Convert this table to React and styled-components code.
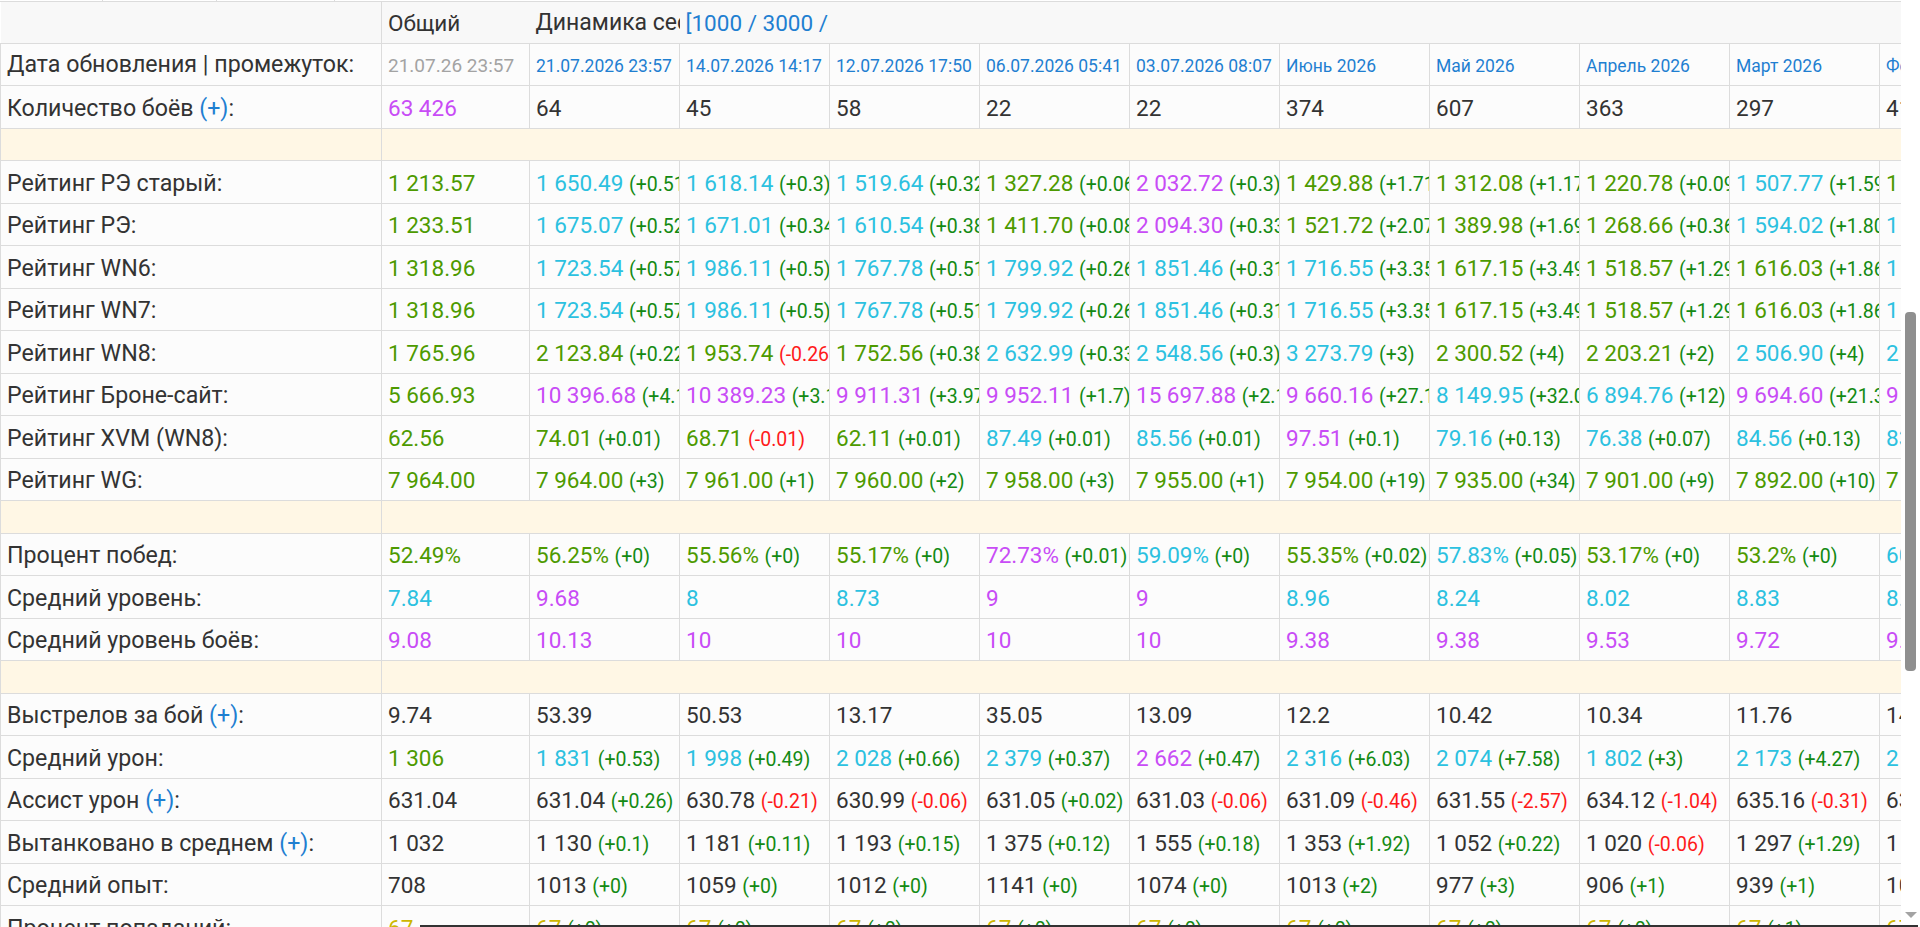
import React from 'react';
import styled, { createGlobalStyle } from 'styled-components';

const GlobalStyle = createGlobalStyle`
  html, body {
    margin: 0;
    height: 100%;
    overflow: hidden;
    background: #fff;
  }
  body {
    font-family: Roboto, "Liberation Sans", sans-serif;
  }
`;

const TONES = {
  g: '#4d9a00',
  c: '#2cc1e0',
  p: '#c84cf6',
  y: '#cdb700',
};

const COLUMNS = [
  '21.07.2026 23:57',
  '14.07.2026 14:17',
  '12.07.2026 17:50',
  '06.07.2026 05:41',
  '03.07.2026 08:07',
  'Июнь 2026',
  'Май 2026',
  'Апрель 2026',
  'Март 2026',
  'Февраль 2026',
];

const COUNTS = ['64', '45', '58', '22', '22', '374', '607', '363', '297', '412'];

const WN6 = [
  ['1 723.54', 'c', '+0.57'], ['1 986.11', 'c', '+0.5'], ['1 767.78', 'c', '+0.51'],
  ['1 799.92', 'c', '+0.26'], ['1 851.46', 'c', '+0.31'], ['1 716.55', 'c', '+3.35'],
  ['1 617.15', 'g', '+3.49'], ['1 518.57', 'g', '+1.29'], ['1 616.03', 'g', '+1.86'],
  ['1 702.44', 'c', '+2.1'],
];

// groups of rows, a yellow band goes between them
const GROUPS = [
  [
    {
      label: 'Рейтинг РЭ старый:', total: ['1 213.57', 'g'],
      cells: [
        ['1 650.49', 'c', '+0.51'], ['1 618.14', 'c', '+0.3'], ['1 519.64', 'c', '+0.32'],
        ['1 327.28', 'g', '+0.06'], ['2 032.72', 'p', '+0.3'], ['1 429.88', 'g', '+1.71'],
        ['1 312.08', 'g', '+1.17'], ['1 220.78', 'g', '+0.09'], ['1 507.77', 'c', '+1.59'],
        ['1 398.42', 'g', '+1.2'],
      ],
    },
    {
      label: 'Рейтинг РЭ:', total: ['1 233.51', 'g'],
      cells: [
        ['1 675.07', 'c', '+0.52'], ['1 671.01', 'c', '+0.34'], ['1 610.54', 'c', '+0.38'],
        ['1 411.70', 'g', '+0.08'], ['2 094.30', 'p', '+0.33'], ['1 521.72', 'g', '+2.07'],
        ['1 389.98', 'g', '+1.69'], ['1 268.66', 'g', '+0.36'], ['1 594.02', 'c', '+1.80'],
        ['1 552.10', 'c', '+1.4'],
      ],
    },
    { label: 'Рейтинг WN6:', total: ['1 318.96', 'g'], cells: WN6 },
    { label: 'Рейтинг WN7:', total: ['1 318.96', 'g'], cells: WN6 },
    {
      label: 'Рейтинг WN8:', total: ['1 765.96', 'g'],
      cells: [
        ['2 123.84', 'g', '+0.22'], ['1 953.74', 'g', '-0.26'], ['1 752.56', 'g', '+0.38'],
        ['2 632.99', 'c', '+0.33'], ['2 548.56', 'c', '+0.3'], ['3 273.79', 'c', '+3'],
        ['2 300.52', 'g', '+4'], ['2 203.21', 'g', '+2'], ['2 506.90', 'c', '+4'],
        ['2 611.37', 'c', '+3'],
      ],
    },
    {
      label: 'Рейтинг Броне-сайт:', total: ['5 666.93', 'g'],
      cells: [
        ['10 396.68', 'p', '+4.1'], ['10 389.23', 'p', '+3.1'], ['9 911.31', 'p', '+3.97'],
        ['9 952.11', 'p', '+1.7'], ['15 697.88', 'p', '+2.1'], ['9 660.16', 'p', '+27.14'],
        ['8 149.95', 'c', '+32.02'], ['6 894.76', 'c', '+12'], ['9 694.60', 'p', '+21.3'],
        ['9 102.55', 'p', '+18'],
      ],
    },
    {
      label: 'Рейтинг XVM (WN8):', total: ['62.56', 'g'],
      cells: [
        ['74.01', 'g', '+0.01'], ['68.71', 'g', '-0.01'], ['62.11', 'g', '+0.01'],
        ['87.49', 'c', '+0.01'], ['85.56', 'c', '+0.01'], ['97.51', 'p', '+0.1'],
        ['79.16', 'c', '+0.13'], ['76.38', 'c', '+0.07'], ['84.56', 'c', '+0.13'],
        ['83.20', 'c', '+0.1'],
      ],
    },
    {
      label: 'Рейтинг WG:', total: ['7 964.00', 'g'],
      cells: [
        ['7 964.00', 'g', '+3'], ['7 961.00', 'g', '+1'], ['7 960.00', 'g', '+2'],
        ['7 958.00', 'g', '+3'], ['7 955.00', 'g', '+1'], ['7 954.00', 'g', '+19'],
        ['7 935.00', 'g', '+34'], ['7 901.00', 'g', '+9'], ['7 892.00', 'g', '+10'],
        ['7 882.00', 'g', '+8'],
      ],
    },
  ],
  [
    {
      label: 'Процент побед:', total: ['52.49%', 'g'],
      cells: [
        ['56.25%', 'g', '+0'], ['55.56%', 'g', '+0'], ['55.17%', 'g', '+0'],
        ['72.73%', 'p', '+0.01'], ['59.09%', 'c', '+0'], ['55.35%', 'g', '+0.02'],
        ['57.83%', 'c', '+0.05'], ['53.17%', 'g', '+0'], ['53.2%', 'g', '+0'],
        ['60.1%', 'c', '+0.02'],
      ],
    },
    {
      label: 'Средний уровень:', total: ['7.84', 'c'],
      cells: [
        ['9.68', 'p'], ['8', 'c'], ['8.73', 'c'], ['9', 'p'], ['9', 'p'],
        ['8.96', 'c'], ['8.24', 'c'], ['8.02', 'c'], ['8.83', 'c'], ['8.5', 'c'],
      ],
    },
    {
      label: 'Средний уровень боёв:', total: ['9.08', 'p'],
      cells: [
        ['10.13', 'p'], ['10', 'p'], ['10', 'p'], ['10', 'p'], ['10', 'p'],
        ['9.38', 'p'], ['9.38', 'p'], ['9.53', 'p'], ['9.72', 'p'], ['9.6', 'p'],
      ],
    },
  ],
  [
    {
      label: 'Выстрелов за бой', plus: true, total: ['9.74'],
      cells: [
        ['53.39'], ['50.53'], ['13.17'], ['35.05'], ['13.09'],
        ['12.2'], ['10.42'], ['10.34'], ['11.76'], ['14.2'],
      ],
    },
    {
      label: 'Средний урон:', total: ['1 306', 'g'],
      cells: [
        ['1 831', 'c', '+0.53'], ['1 998', 'c', '+0.49'], ['2 028', 'c', '+0.66'],
        ['2 379', 'c', '+0.37'], ['2 662', 'p', '+0.47'], ['2 316', 'c', '+6.03'],
        ['2 074', 'c', '+7.58'], ['1 802', 'c', '+3'], ['2 173', 'c', '+4.27'],
        ['2 240', 'c', '+5'],
      ],
    },
    {
      label: 'Ассист урон', plus: true, total: ['631.04'],
      cells: [
        ['631.04', null, '+0.26'], ['630.78', null, '-0.21'], ['630.99', null, '-0.06'],
        ['631.05', null, '+0.02'], ['631.03', null, '-0.06'], ['631.09', null, '-0.46'],
        ['631.55', null, '-2.57'], ['634.12', null, '-1.04'], ['635.16', null, '-0.31'],
        ['635.47', null, '-0.5'],
      ],
    },
    {
      label: 'Вытанковано в среднем', plus: true, total: ['1 032'],
      cells: [
        ['1 130', null, '+0.1'], ['1 181', null, '+0.11'], ['1 193', null, '+0.15'],
        ['1 375', null, '+0.12'], ['1 555', null, '+0.18'], ['1 353', null, '+1.92'],
        ['1 052', null, '+0.22'], ['1 020', null, '-0.06'], ['1 297', null, '+1.29'],
        ['1 240', null, '+1.1'],
      ],
    },
    {
      label: 'Средний опыт:', total: ['708'],
      cells: [
        ['1013', null, '+0'], ['1059', null, '+0'], ['1012', null, '+0'],
        ['1141', null, '+0'], ['1074', null, '+0'], ['1013', null, '+2'],
        ['977', null, '+3'], ['906', null, '+1'], ['939', null, '+1'],
        ['1005', null, '+2'],
      ],
    },
    {
      label: 'Процент попаданий:', total: ['67', 'y'],
      cells: [
        ['67', 'y', '+0'], ['67', 'y', '+0'], ['67', 'y', '+0'], ['67', 'y', '+0'],
        ['67', 'y', '+0'], ['67', 'y', '+0'], ['67', 'y', '+0'], ['67', 'y', '+0'],
        ['67', 'y', '+1'], ['67', 'y', '+0'],
      ],
    },
  ],
];

export default function App() {
  const tableWidth = 381 + 148 + COLUMNS.length * 150;

  return (
    <Page>
      <GlobalStyle />
      <Main>
        <TopStrip>
          <StripCell $w={103} />
          <StripCell $w={114} />
          <StripCell $w={118} />
        </TopStrip>
        <Table $width={tableWidth}>
          <colgroup>
            <Col $w={381} />
            <Col $w={148} />
            {COLUMNS.map((c) => <Col key={c} $w={150} />)}
          </colgroup>
          <tbody>
            <tr>
              <HeadCell />
              <HeadCell $divider>Общий</HeadCell>
              <HeadCell $wide>Динамика сессий</HeadCell>
              <HeadCell><Link>[1000 / 3000 / 5000 / 10000]</Link></HeadCell>
              {COLUMNS.slice(2).map((c) => <HeadCell key={c} />)}
            </tr>
            <tr>
              <LabelCell $even>Дата обновления | промежуток:</LabelCell>
              <Cell $even><DateText $muted>21.07.26 23:57</DateText></Cell>
              {COLUMNS.map((c) => (
                <Cell key={c} $even><DateText>{c}</DateText></Cell>
              ))}
            </tr>
            <tr>
              <LabelCell>Количество боёв <Link>(+)</Link>:</LabelCell>
              <Cell><Value $tone="p">63 426</Value></Cell>
              {COUNTS.map((n, i) => <Cell key={i}>{n}</Cell>)}
            </tr>
            {GROUPS.map((group, gi) => (
              <React.Fragment key={gi}>
                <tr>
                  <BandCell><BandFill /></BandCell>
                  <BandCell colSpan={COLUMNS.length + 1}><BandFill /></BandCell>
                </tr>
                {group.map((row) => (
                  <tr key={row.label}>
                    <LabelCell>
                      {row.label}
                      {row.plus && <> <Link>(+)</Link>:</>}
                    </LabelCell>
                    <Cell><Value $tone={row.total[1]}>{row.total[0]}</Value></Cell>
                    {row.cells.map(([v, tone, d], i) => (
                      <Cell key={i}>
                        <Value $tone={tone}>{v}</Value>
                        {d && <> <Delta $neg={d[0] === '-'}>({d})</Delta></>}
                      </Cell>
                    ))}
                  </tr>
                ))}
              </React.Fragment>
            ))}
          </tbody>
        </Table>
        <BottomEdge />
      </Main>
      <ScrollBar>
        <ScrollThumb $top={312} $height={359} />
        <ScrollArrow />
      </ScrollBar>
    </Page>
  );
}

const Page = styled.div`
  display: flex;
  height: 100vh;
  overflow: hidden;
`;

const Main = styled.div`
  flex: 1;
  min-width: 0;
  overflow: hidden;
  background: #fff;
`;

const TopStrip = styled.div`
  display: flex;
  height: 1px;
  border-bottom: 1px solid #dcdcdc;
`;

const StripCell = styled.div`
  width: ${(p) => p.$w}px;
  box-sizing: border-box;
  border-right: 1px solid #dcdcdc;
`;

const Table = styled.table`
  table-layout: fixed;
  border-collapse: collapse;
  width: ${(p) => p.$width}px;
  font-family: Roboto, "Liberation Sans", sans-serif;
  font-size: 22.5px;
  color: #333;
`;

const Col = styled.col`
  width: ${(p) => p.$w}px;
`;

const HeadCell = styled.th`
  padding: 8px 6px 6px;
  line-height: 26.5px;
  font-weight: 400;
  font-size: ${(p) => (p.$wide ? '23px' : '22.5px')};
  text-align: left;
  white-space: nowrap;
  overflow: hidden;
  background: #f8f8f8;
  border-bottom: 1px solid #dcdcdc;
  border-left: ${(p) => (p.$divider ? '1px solid #dcdcdc' : 'none')};
`;

const Cell = styled.td`
  padding: ${(p) => (p.$even ? '7px 6px' : '8.5px 6px 5.5px')};
  line-height: 27.5px;
  white-space: nowrap;
  overflow: hidden;
  background: #fcfcfc;
  border: 1px solid #dcdcdc;
  border-top: none;
`;

const LabelCell = styled(Cell)`
  font-size: 23.2px;
`;

const BandCell = styled.td`
  padding: 0;
  background: #fff7e5;
  border: 1px solid #dcdcdc;
  border-top: none;
`;

const BandFill = styled.div`
  height: 31.5px;
`;

const Value = styled.span`
  color: ${(p) => TONES[p.$tone] || '#333'};
`;

const Delta = styled.span`
  font-size: 19.5px;
  line-height: 1;
  color: ${(p) => (p.$neg ? '#ff1a1a' : '#138a13')};
`;

const DateText = styled.span`
  font-size: ${(p) => (p.$muted ? '19px' : '17.5px')};
  line-height: 1;
  color: ${(p) => (p.$muted ? '#a3a3a3' : '#1f7fd1')};
`;

const Link = styled.span`
  color: #1f7fd1;
`;

const BottomEdge = styled.div`
  position: fixed;
  left: 420px;
  right: 2px;
  bottom: 0;
  height: 2px;
  background: #333;
`;

const ScrollBar = styled.div`
  width: 19px;
  flex-shrink: 0;
  display: flex;
  flex-direction: column;
  align-items: center;
  background: #fff;
`;

const ScrollThumb = styled.div`
  margin-top: ${(p) => p.$top}px;
  height: ${(p) => p.$height}px;
  width: 11px;
  border-radius: 4px;
  background: #8f8f8f;
`;

const ScrollArrow = styled.div`
  margin-top: auto;
  margin-bottom: 9px;
  width: 0;
  height: 0;
  border-left: 6px solid transparent;
  border-right: 6px solid transparent;
  border-top: 6px solid #a3a3a3;
`;
